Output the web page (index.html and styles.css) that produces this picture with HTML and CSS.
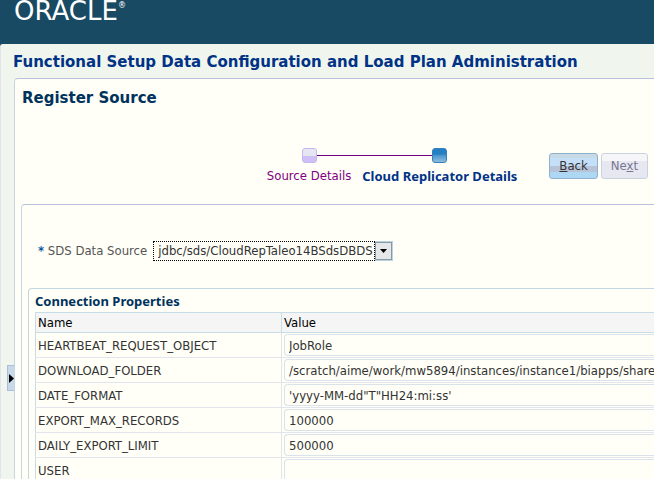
FILE: index.html
```html
<!DOCTYPE html>
<html lang="en">
<head>
<meta charset="utf-8">
<title>Register Source</title>
<link rel="stylesheet" href="styles.css">
</head>
<body>
<header class="banner"><span class="logo">ORACLE<sup class="mark">®</sup></span></header>
<div class="workspace">
  <h1 class="page-title">Functional Setup Data Configuration and Load Plan Administration</h1>
  <div class="content">
    <div class="rail">
      <button class="expander" type="button" aria-label="Expand pane"><svg viewBox="0 0 5 9" width="5" height="9"><path d="M0 0L5 4.500L0 9Z"/></svg></button>
    </div>
    <main class="panel">
      <h2 class="panel-title">Register Source</h2>
      <div class="toolbar">
        <ol class="train">
          <li class="stop visited"><span class="node"></span><a class="stop-label" href="#">Source Details</a></li>
          <li class="stop current"><span class="node"></span><span class="stop-label">Cloud Replicator Details</span></li>
        </ol>
        <div class="actions">
          <button class="btn" type="button"><u>B</u>ack</button>
          <button class="btn" type="button" disabled>Ne<u>x</u>t</button>
        </div>
      </div>
      <section class="form">
        <div class="field">
          <label class="field-label" for="sds"><span class="required">*</span> SDS Data Source</label>
          <div class="picker">
            <select id="sds" class="picker-select"><option>jdbc/sds/CloudRepTaleo14BSdsDBDS</option></select>
            <span class="picker-arrow"><svg viewBox="0 0 7 4" width="7" height="4"><path d="M0 0H7L3.500 4Z"/></svg></span>
          </div>
        </div>
        <section class="group">
          <h3 class="group-title">Connection Properties</h3>
          <table class="props">
            <thead><tr><th class="name-col">Name</th><th>Value</th></tr></thead>
            <tbody>
              <tr><td><label for="p1">HEARTBEAT_REQUEST_OBJECT</label></td><td class="value"><input id="p1" value="JobRole"></td></tr>
              <tr><td><label for="p2">DOWNLOAD_FOLDER</label></td><td class="value"><input id="p2" value="/scratch/aime/work/mw5894/instances/instance1/biapps/shared"></td></tr>
              <tr><td><label for="p3">DATE_FORMAT</label></td><td class="value"><input id="p3" value="'yyyy-MM-dd&quot;T&quot;HH24:mi:ss'"></td></tr>
              <tr><td><label for="p4">EXPORT_MAX_RECORDS</label></td><td class="value"><input id="p4" value="100000"></td></tr>
              <tr><td><label for="p5">DAILY_EXPORT_LIMIT</label></td><td class="value"><input id="p5" value="500000"></td></tr>
              <tr><td><label for="p6">USER</label></td><td class="value"><input id="p6" value=""></td></tr>
            </tbody>
          </table>
        </section>
      </section>
    </main>
  </div>
</div>
</body>
</html>
```
FILE: styles.css
```css
* { box-sizing: border-box; }
body {
  margin: 0;
  height: 100vh;
  overflow: hidden;
  background: #194a63;
  color: #333;
  font: 13px/16px "DejaVu Sans Condensed", "Noto Sans", sans-serif;
}
h1, h2, h3, ol { margin: 0; padding: 0; }
.banner { height: 44px; padding-left: 14px; }
.logo { display: flex; color: #fff; font: 26px/22px "DejaVu Sans", sans-serif; }
.mark { font-size: 8px; line-height: 12px; }
.workspace {
  min-height: calc(100vh - 44px);
  display: flex;
  flex-direction: column;
  border-left: 1px solid #e2e4f0;
  border-top-left-radius: 3px;
  background: #f0f6ee;
}
.page-title, .panel-title { font: bold 15px/20px "DejaVu Sans", sans-serif; }
.page-title { padding: 8px 12px 6px; color: #003286; white-space: nowrap; }
.content { flex: 1; display: flex; }
.rail { width: 13px; padding: 287px 0 0 6px; }
.expander {
  display: flex;
  align-items: center;
  width: 7px;
  height: 26px;
  padding: 0 0 0 1px;
  border: 1px solid #a9bedd;
  border-right: 0;
  background: #c8d9e8;
}
.panel {
  flex: 1;
  min-width: 0;
  border: solid #c4d6e4;
  border-width: 1px 0 0 1px;
  border-top-color: #b8c2dc;
  border-top-left-radius: 4px;
  background: #fffff8;
}
.panel-title { padding: 9px 7px 0; color: #00335c; }
.toolbar { display: flex; justify-content: flex-end; gap: 32px; padding: 40px 6px 0 0; }
.train { display: flex; gap: 11px; list-style: none; }
.stop { position: relative; display: flex; flex-direction: column; align-items: center; gap: 5px; white-space: nowrap; }
.node { position: relative; width: 15px; height: 15px; border: 1px solid #c5b8ee; border-radius: 3px; background: linear-gradient(#e6e6f2 50%, #d0bff7 50%); }
.visited .node::after { content: ""; position: absolute; left: 14px; top: 6px; width: 116px; height: 1px; background: #700080; }
.current .node { border-color: #367fb9; background: linear-gradient(#2580c4 40%, #4c96cc 50%, #8dbde1); }
.stop-label { color: #800080; text-decoration: none; }
.current .stop-label { color: #003286; font: bold 13px/16px "Noto Sans", sans-serif; }
.actions { display: flex; gap: 3px; padding-top: 5px; }
.btn {
  height: 26px;
  padding: 0 9px;
  border: 1px solid #8fb1cd;
  border-radius: 3px;
  background: linear-gradient(#c8dae6 0 4px, #c5dff8 4px 12px, #b9c3d8 12px 18px, #add7f2 18px);
  color: #333;
  font: inherit;
}
.btn:disabled { border-color: #c8d3de; background: linear-gradient(#f6f6f9 0 7px, #e7e7f1 7px); color: #777790; }
.form { margin: 20px 0 0 6px; padding: 36px 0 0 6px; border: solid #c4d6e4; border-width: 1px 0 0 1px; border-top-color: #b8c2dc; border-top-left-radius: 4px; }
.field { display: flex; align-items: center; gap: 6px; padding-left: 10px; }
.field-label { color: #555; }
.required { color: #0b5ba0; font-weight: bold; }
.picker { position: relative; display: flex; width: 240px; height: 20px; border: 1px solid #b9d4e0; }
.picker-select { appearance: none; flex: 1; min-width: 0; margin: -1px 17px -1px -1px; padding: 0 0 0 4px; border: 1px dotted #000; border-radius: 0; background: #fffff8; color: #333; font: inherit; }
.picker-arrow { position: absolute; top: 0; right: 0; display: grid; place-items: center; width: 17px; height: 18px; border: 1px solid #8a9aa4; background: #e4e8ea; pointer-events: none; }
.group { margin-top: 27px; padding: 4px 0 0 6px; border: solid #c4d6e4; border-width: 1px 0 0 1px; border-top-left-radius: 4px; }
.group-title { padding-bottom: 3px; color: #00335c; font: bold 13px/16px "Noto Sans", sans-serif; }
.props { width: 100%; table-layout: fixed; border-collapse: collapse; border: 1px solid #c8dce8; border-width: 1px 0 0 1px; }
th { height: 20px; padding: 1px 2px 0; background: #f5f5f5; border: solid #c8dce8; border-width: 0 0 1px; color: #000; font-weight: normal; text-align: left; }
.name-col { width: 246px; border-right-width: 1px; }
td { height: 25px; padding: 2px 2px 0; border-bottom: 1px solid #e2e4ee; border-right: 1px solid #e2e4ee; }
td:last-child { border-right: 0; }
.value { padding: 1px 0 1px 2px; }
input { display: block; width: 100%; height: 22px; padding: 0 0 0 4px; border: 1px solid #d8e3ea; border-right: 0; border-radius: 4px 0 0 4px; background: #fffff8; color: #333; font: inherit; }
```
